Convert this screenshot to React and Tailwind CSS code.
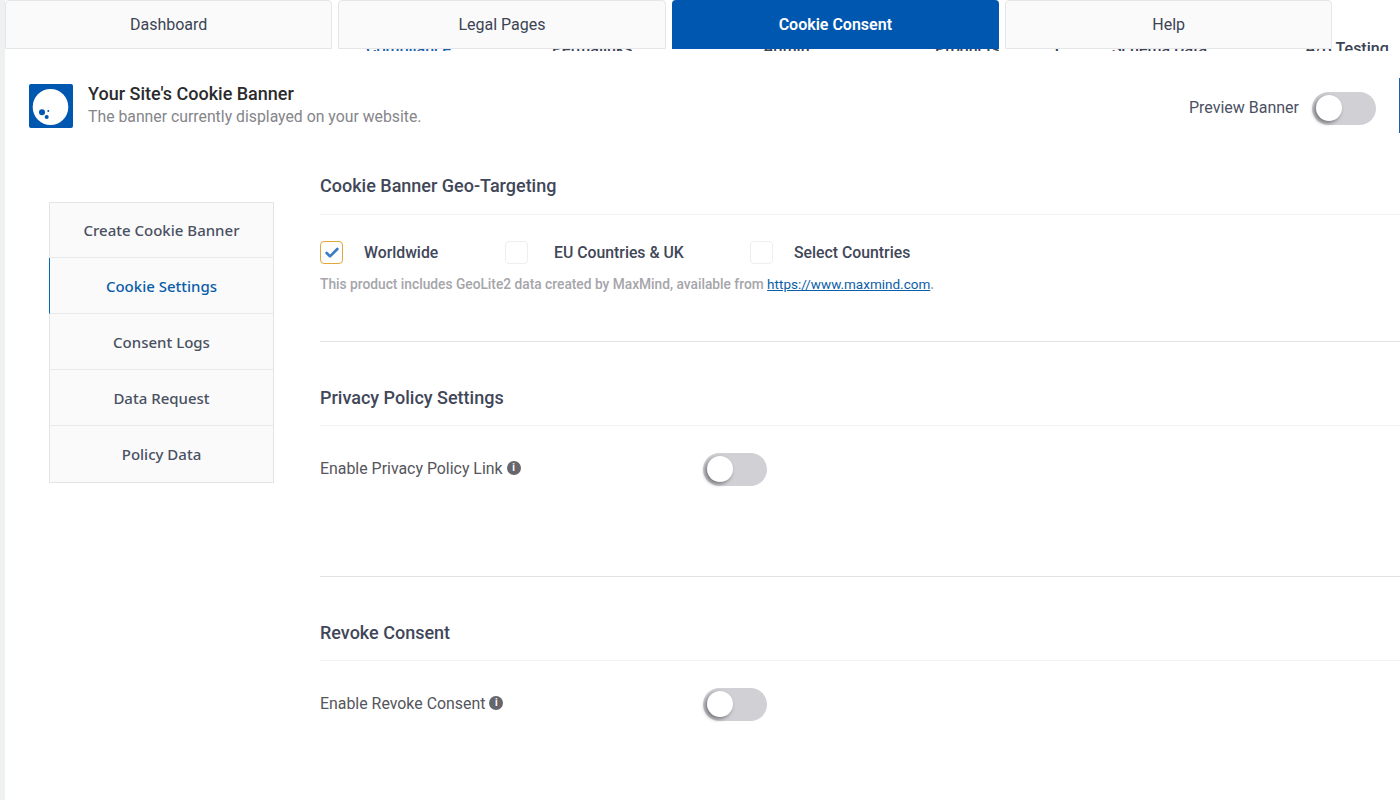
import React from 'react';
import { Check } from 'lucide-react';

const roboto = { fontFamily: 'Roboto, sans-serif' };

const tabs = ['Dashboard', 'Legal Pages', 'Cookie Consent', 'Help'];
const sideItems = ['Create Cookie Banner', 'Cookie Settings', 'Consent Logs', 'Data Request', 'Policy Data'];

const Toggle = () => (
  <div className="relative w-[64px] h-[33px] rounded-full bg-[#d0d0d5]">
    <div className="absolute left-[4px] top-[3px] w-[26px] h-[26px] rounded-full bg-white shadow-[-2px_2px_4px_rgba(0,0,0,0.45)]" />
  </div>
);

const InfoDot = () => (
  <span className="inline-flex items-center justify-center w-[14px] h-[14px] rounded-full bg-[#66666c] text-white text-[10px] font-bold leading-none">i</span>
);

const CheckBox = ({ checked }) => (
  <div className={`w-[23px] h-[23px] rounded-[4px] border flex items-center justify-center ${checked ? 'border-[#e0a83c]' : 'border-[#eeeeef]'}`}>
    {checked && <Check size={16} strokeWidth={4} className="text-[#3b7dc4]" />}
  </div>
);

const Section = ({ title, className, titleClass, children }) => (
  <section className={className}>
    <h2 className={`text-[18px] leading-[24px] font-medium text-[#3f4759] border-b border-[#f3f3f4] ${titleClass}`}>{title}</h2>
    {children}
  </section>
);

const App = () => {
  return (
    <div className="relative w-[1400px] h-[800px] overflow-hidden bg-[#eef0f1] pl-[5px]" style={roboto}>
      <div className="relative h-full bg-white">
        {/* text of the page behind, only its top shows under the tabs */}
        <div className="absolute left-0 top-[40px] w-full h-[11px] flex overflow-hidden text-[16px] leading-[18px] font-medium text-[#3b4354]">
          <span className="ml-[361px] w-[186px] text-[#1a5fb0]">Compliance</span>
          <span className="w-[211px]">Permalinks</span>
          <span className="w-[172px]">Admin</span>
          <span className="w-[117px]">Products</span>
          <span className="w-[60px]">Y</span>
          <span className="w-[193px]">Schema Data</span>
          <span>A/B Testing</span>
        </div>

        <div className="relative flex gap-[6px] h-[49px]">
          {tabs.map((t) => (
            <div
              key={t}
              className={`w-[327.33px] rounded-t-[4px] flex items-center justify-center text-[16px] ${
                t === 'Cookie Consent'
                  ? 'bg-[#0057b0] text-white font-semibold'
                  : 'bg-[#fafafa] text-[#3b4354] border border-[#e6e6e8]'
              }`}
            >
              {t}
            </div>
          ))}
        </div>

        <div className="relative mt-[2px] h-[749px] bg-white">
          <header className="flex items-center justify-between px-[24px] pt-[33px]">
            <div className="flex items-center gap-[15px]">
              <svg width="44" height="44" viewBox="0 0 44 44">
                <rect width="44" height="44" rx="2" fill="#0057b0" />
                <ellipse cx="21.5" cy="23" rx="17.8" ry="18" fill="white" />
                <circle cx="13" cy="28.3" r="3" fill="#0057b0" />
                <circle cx="17.7" cy="33" r="2" fill="#0057b0" />
                <circle cx="19.3" cy="27" r="1" fill="#0057b0" />
              </svg>
              <div className="-mt-[3px]">
                <div className="text-[18px] leading-[24px] font-medium text-[#2b2b2e]">Your Site's Cookie Banner</div>
                <div className="text-[15.8px] leading-[22px] text-[#85858a]">The banner currently displayed on your website.</div>
              </div>
            </div>
            <div className="flex items-center gap-[13px] mt-[4px]">
              <span className="text-[16px] text-[#4b5163]">Preview Banner</span>
              <Toggle />
            </div>
          </header>

          <div className="absolute right-0 top-[27px] w-px h-[55px] bg-[#1a5fb0]" />

          <div className="flex pl-[44px] pt-[46px]">
            <nav className="w-[225px] h-[281px] mt-[28px] border border-[#e4e4e6] bg-[#fafafa] shrink-0">
              {sideItems.map((s, i) => (
                <div
                  key={s}
                  className={`flex items-center justify-center pt-[1px] text-[15px] font-medium ${i === 0 ? 'h-[55px]' : 'h-[56px]'} ${
                    i < sideItems.length - 1 ? 'border-b border-[#e9e9eb]' : ''
                  } ${s === 'Cookie Settings' ? 'text-[#0b5ea8] border-l border-l-[#0868b8] -ml-px' : 'text-[#495063]'}`}
                  style={{ fontFamily: '"Noto Sans", sans-serif' }}
                >
                  {s}
                </div>
              ))}
            </nav>

            <main className="flex-1 ml-[46px]">
              <Section title="Cookie Banner Geo-Targeting" titleClass="pb-[16px]" className="h-[168px] border-b border-[#e2e2e4]">
                <div className="flex items-center mt-[26px] text-[15.8px] font-medium text-[#3f4759]">
                  <CheckBox checked />
                  <span className="ml-[21px] w-[141px]">Worldwide</span>
                  <CheckBox />
                  <span className="ml-[26px] w-[196px]">EU Countries &amp; UK</span>
                  <CheckBox />
                  <span className="ml-[21px]">Select Countries</span>
                </div>
                <p className="mt-[9px] text-[13.75px] leading-[20px] font-medium text-[#a5a5aa]">
                  This product includes GeoLite2 data created by MaxMind, available from{' '}
                  <a href="#maxmind" className="underline text-[13.5px] text-[#0b5ea8] font-normal">https://www.maxmind.com</a>.
                </p>
              </Section>

              <Section title="Privacy Policy Settings" titleClass="pb-[15px]" className="h-[235px] pt-[44px] border-b border-[#e2e2e4]">
                <div className="flex items-center mt-[25px]">
                  <div className="w-[383px] flex items-center gap-[4px] text-[15.9px] text-[#55555c]">
                    Enable Privacy Policy Link <InfoDot />
                  </div>
                  <div className="mt-[2px]"><Toggle /></div>
                </div>
              </Section>

              <Section title="Revoke Consent" titleClass="pb-[15px]" className="pt-[44px]">
                <div className="flex items-center mt-[25px]">
                  <div className="w-[383px] flex items-center gap-[4px] text-[15.9px] text-[#55555c]">
                    Enable Revoke Consent <InfoDot />
                  </div>
                  <div className="mt-[2px]"><Toggle /></div>
                </div>
              </Section>
            </main>
          </div>
        </div>
      </div>
    </div>
  );
};

export default App;
